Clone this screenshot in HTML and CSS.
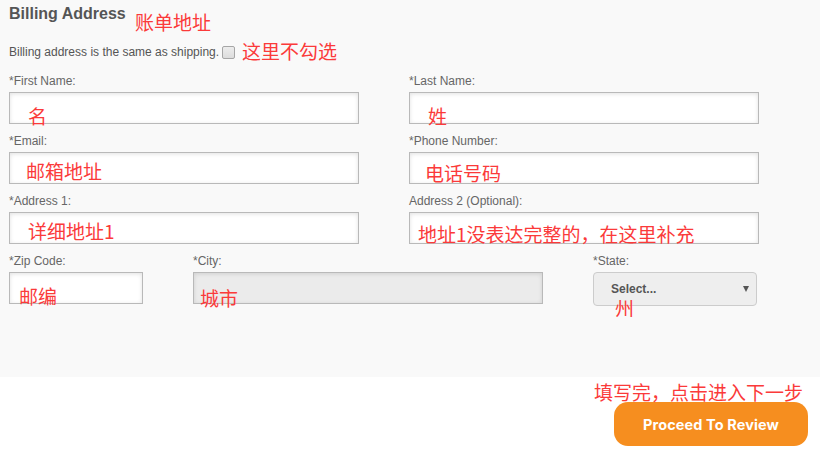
FILE: index.html
```html
<!DOCTYPE html>
<html lang="en">

<head>
  <meta charset="UTF-8">
  <meta name="viewport" content="width=device-width, initial-scale=1.0">
  <title>Billing Address</title>
  <link rel="stylesheet" href="styles.css">
</head>

<body>
  <section class="billing">
    <h2 class="title">Billing Address</h2>
    <span class="note note-title">账单地址</span>

    <div class="same">
      <label for="same-shipping">Billing address is the same as shipping.</label>
      <input type="checkbox" id="same-shipping">
      <span class="note note-same">这里不勾选</span>
    </div>

    <div class="form">
      <div class="row">
        <div class="field">
          <label for="first-name">*First Name:</label>
          <input type="text" id="first-name">
          <span class="note note-name">名</span>
        </div>
        <div class="field">
          <label for="last-name">*Last Name:</label>
          <input type="text" id="last-name">
          <span class="note note-name">姓</span>
        </div>
      </div>

      <div class="row">
        <div class="field">
          <label for="email">*Email:</label>
          <input type="text" id="email">
          <span class="note note-email">邮箱地址</span>
        </div>
        <div class="field">
          <label for="phone">*Phone Number:</label>
          <input type="text" id="phone">
          <span class="note note-phone">电话号码</span>
        </div>
      </div>

      <div class="row">
        <div class="field">
          <label for="address1">*Address 1:</label>
          <input type="text" id="address1">
          <span class="note note-addr1">详细地址1</span>
        </div>
        <div class="field">
          <label for="address2">Address 2 (Optional):</label>
          <input type="text" id="address2">
          <span class="note note-addr2">地址1没表达完整的，在这里补充</span>
        </div>
      </div>

      <div class="row">
        <div class="field field-zip">
          <label for="zip">*Zip Code:</label>
          <input type="text" id="zip">
          <span class="note note-zip">邮编</span>
        </div>
        <div class="field">
          <label for="city">*City:</label>
          <input type="text" id="city" class="readonly" readonly>
          <span class="note note-city">城市</span>
        </div>
        <div class="field field-state">
          <label for="state">*State:</label>
          <div class="select-wrap">
            <select id="state">
              <option>Select...</option>
            </select>
          </div>
          <span class="note note-state">州</span>
        </div>
      </div>
    </div>
  </section>

  <footer class="actions">
    <span class="note note-next">填写完，点击进入下一步</span>
    <button class="proceed">Proceed To Review</button>
  </footer>
</body>

</html>
```

FILE: styles.css
```css
/* Basic styling */
body {
  margin: 0;
  font-family: "Liberation Sans", Arial, sans-serif;
  background-color: #fff;
  color: #555;
}

.billing {
  position: relative;
  height: 377px;
  box-sizing: border-box;
  padding: 5px 9px 0;
  background-color: #f9f9f9;
}

.title {
  margin: 0;
  font-size: 16px;
  line-height: 18px;
  font-weight: bold;
  color: #555;
}

/* red hand-written notes laid over the form */
.note {
  position: absolute;
  font-family: "Noto Sans CJK SC", sans-serif;
  font-size: 19px;
  line-height: 1;
  color: #fb3a3a;
  white-space: nowrap;
}

.note-title {
  left: 135px;
  top: 12px;
}

.same {
  position: relative;
  display: flex;
  align-items: center;
  margin-top: 22px;
  font-size: 12px;
  line-height: 14px;
  color: #555;
}

.same input {
  width: 13px;
  height: 13px;
  margin: 0 0 0 3px;
  border: 1px solid #a6a6a6;
  border-radius: 2px;
  background: linear-gradient(#ededed, #dcdcdc);
  appearance: none;
  -webkit-appearance: none;
}

.note-same {
  left: 233px;
  top: -4px;
}

.form {
  margin-top: 15px;
}

.row {
  display: flex;
  gap: 50px;
  margin-bottom: 10px;
}

.field {
  position: relative;
  width: 350px;
}

.field label {
  display: block;
  margin-bottom: 4px;
  font-size: 12px;
  line-height: 14px;
  color: #666;
}

.field input {
  display: block;
  width: 100%;
  height: 32px;
  box-sizing: border-box;
  padding: 0 8px;
  border: 1px solid #b9b9b9;
  background-color: #fff;
  box-shadow: inset 0 1px 4px rgba(0, 0, 0, 0.12);
  font-size: 13px;
}

.field input.readonly {
  background-color: #ebebeb;
}

.field-zip {
  width: 134px;
}

.field-state {
  width: 164px;
}

.select-wrap {
  position: relative;
}

.select-wrap select {
  display: block;
  width: 100%;
  height: 34px;
  padding: 0 17px;
  border: 1px solid #ccc;
  border-radius: 4px;
  background-color: #eee;
  font-family: "Liberation Sans", Arial, sans-serif;
  font-size: 12px;
  font-weight: bold;
  color: #555;
  appearance: none;
  -webkit-appearance: none;
}

.select-wrap::after {
  content: "";
  position: absolute;
  right: 8px;
  top: 14px;
  border-left: 3px solid transparent;
  border-right: 3px solid transparent;
  border-top: 6px solid #555;
}

.note-name {
  left: 19px;
  top: 32px;
}

.note-email {
  left: 17px;
  top: 27px;
}

.note-phone {
  left: 16px;
  top: 29px;
}

.note-addr1 {
  left: 19px;
  top: 27px;
}

.note-addr2 {
  left: 9px;
  top: 30px;
}

.note-zip {
  left: 10px;
  top: 32px;
}

.note-city {
  left: 7px;
  top: 34px;
}

.note-state {
  left: 22px;
  top: 44px;
}

.actions {
  position: relative;
  display: flex;
  justify-content: flex-end;
  padding: 25px 12px 0 0;
}

.note-next {
  left: 594px;
  top: 5px;
}

.proceed {
  width: 194px;
  height: 44px;
  border: none;
  border-radius: 14px;
  background-color: #f68e1f;
  color: #fff;
  font-family: Inter, "Liberation Sans", sans-serif;
  font-size: 14.5px;
  font-weight: 700;
  letter-spacing: 0.1px;
  cursor: pointer;
}
```
